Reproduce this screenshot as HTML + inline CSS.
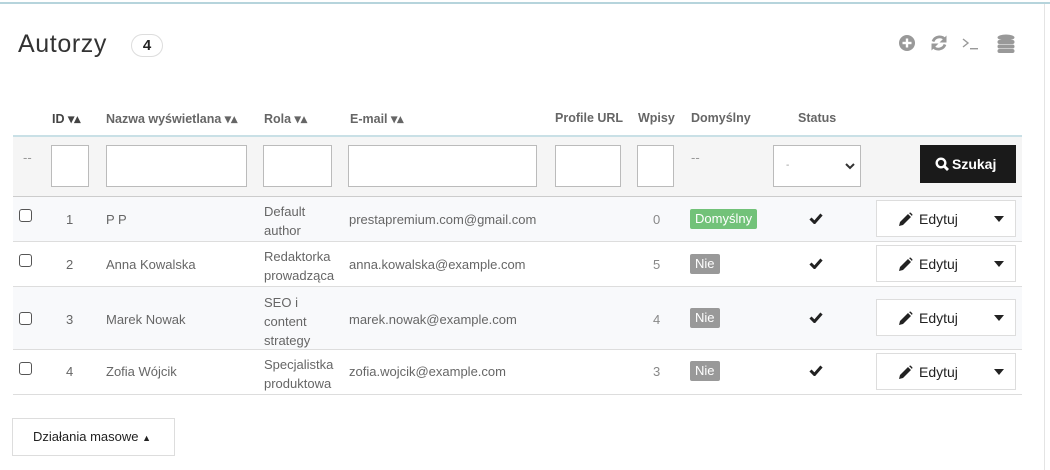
<!DOCTYPE html>
<html><head><meta charset="utf-8"><style>
*{box-sizing:border-box;margin:0;padding:0}
body{width:1050px;height:470px;background:#fff;font-family:"Liberation Sans",sans-serif;position:relative;overflow:hidden;color:#555;font-size:13px}
.a{position:absolute;white-space:nowrap}
.th{font-size:12.5px;color:#666;font-weight:bold;top:111px}
.inp{position:absolute;background:#fff;border:1px solid #bbb;top:145px;height:42px}
.row{position:absolute;left:13px;width:1009px;border-bottom:1px solid #ddd}
.cb{position:absolute;left:19px;width:13px;height:13px;border:1px solid #555;border-radius:3px;background:#fff}
.t{font-size:13px;color:#666}
.btn{position:absolute;left:876px;width:140px;height:37px;border:1px solid #ddd;background:#fff;font-size:14px;color:#222}
.lab{position:absolute;left:690px;height:20px;background:#999;color:#fff;border-radius:2px;font-size:13px;padding:2px 5px;line-height:16px}
</style></head><body>
<div class="a" style="left:0;top:2px;width:1050px;height:2px;background:#b6d4dc"></div>
<div class="a" style="left:1044px;top:4px;width:1px;height:466px;background:#e4e4e4"></div>
<div class="a" style="left:18px;top:30px;font-size:25px;color:#333;letter-spacing:0.6px">Autorzy</div>
<div class="a" style="left:131px;top:34px;width:32px;height:23px;border:1px solid #ddd;border-radius:12px;text-align:center;font-weight:bold;font-size:15px;color:#222;line-height:21px">4</div>
<svg class="a" style="left:898px;top:33px" width="120" height="22" viewBox="0 0 120 22">
<circle cx="9" cy="10" r="8" fill="#999"/><rect x="4.5" y="8.8" width="9" height="2.4" fill="#fff"/><rect x="7.8" y="5.5" width="2.4" height="9" fill="#fff"/>
<path d="M47 6.5a7 7 0 0 0-12 2M35 13.5a7 7 0 0 0 12-2" stroke="#999" stroke-width="2.8" fill="none"/><path d="M48.5 2.5v7h-7zM33.5 17.5v-7h7z" fill="#999"/>
<path d="M65 6l5 4-5 4" stroke="#999" stroke-width="1.4" fill="none"/><rect x="72" y="15" width="8" height="1.4" fill="#999"/>
<ellipse cx="108" cy="4.5" rx="8.5" ry="3" fill="#999"/><rect x="99.5" y="7" width="17" height="4" rx="2" fill="#999"/><rect x="99.5" y="11.5" width="17" height="4" rx="2" fill="#999"/><rect x="99.5" y="16" width="17" height="4" rx="2" fill="#999"/>
</svg>
<div class="a th" style="left:52px;color:#444">ID ▾▴</div>
<div class="a th" style="left:106px">Nazwa wyświetlana ▾▴</div>
<div class="a th" style="left:264px">Rola ▾▴</div>
<div class="a th" style="left:350px">E-mail ▾▴</div>
<div class="a th" style="left:555px">Profile URL</div>
<div class="a th" style="left:638px">Wpisy</div>
<div class="a th" style="left:691px">Domyślny</div>
<div class="a th" style="left:798px">Status</div>
<div class="a" style="left:13px;top:135px;width:1009px;height:62px;background:#f5f5f5;border-top:2px solid #c9e0e6;border-bottom:1px solid #ccc"></div>
<div class="a" style="left:23px;top:150px;color:#999">--</div>
<div class="inp" style="left:51px;width:38px"></div>
<div class="inp" style="left:106px;width:141px"></div>
<div class="inp" style="left:263px;width:69px"></div>
<div class="inp" style="left:348px;width:189px"></div>
<div class="inp" style="left:555px;width:66px"></div>
<div class="inp" style="left:637px;width:37px"></div>
<div class="a" style="left:691px;top:150px;color:#999">--</div>
<div class="inp" style="left:773px;width:88px"><span class="a" style="left:12px;top:14px;color:#999;font-size:10px">-</span><svg class="a" style="left:71px;top:17px" width="10" height="7" viewBox="0 0 10 7"><path d="M1 1l4 4 4-4" stroke="#333" stroke-width="2" fill="none"/></svg></div>
<div class="a" style="left:920px;top:145px;width:96px;height:38px;background:#1a1a1a;color:#fff;font-weight:bold;font-size:14px;line-height:38px"><svg class="a" style="left:15px;top:12px" width="14" height="14" viewBox="0 0 14 14"><circle cx="6" cy="6" r="4.3" stroke="#fff" stroke-width="2.4" fill="none"/><path d="M9 9l4 4" stroke="#fff" stroke-width="2.8"/></svg><span class="a" style="left:32px;top:0">Szukaj</span></div>

<div class="row" style="top:197px;height:45px;background:#f8f9fb"></div>
<div class="row" style="top:242px;height:45px"></div>
<div class="row" style="top:287px;height:63px;background:#f8f9fb"></div>
<div class="row" style="top:350px;height:45px"></div>

<div class="cb" style="top:209px"></div><div class="cb" style="top:254px"></div><div class="cb" style="top:312px"></div><div class="cb" style="top:362px"></div>
<div class="a t" style="left:66px;top:212px">1</div><div class="a t" style="left:66px;top:257px">2</div><div class="a t" style="left:66px;top:312px">3</div><div class="a t" style="left:66px;top:364px">4</div>
<div class="a t" style="left:106px;top:212px">P P</div><div class="a t" style="left:106px;top:257px">Anna Kowalska</div><div class="a t" style="left:106px;top:312px">Marek Nowak</div><div class="a t" style="left:106px;top:364px">Zofia Wójcik</div>
<div class="a t" style="left:264px;top:202px;line-height:19px">Default<br>author</div>
<div class="a t" style="left:264px;top:247px;line-height:19px">Redaktorka<br>prowadząca</div>
<div class="a t" style="left:264px;top:293px;line-height:19px">SEO i<br>content<br>strategy</div>
<div class="a t" style="left:264px;top:355px;line-height:19px">Specjalistka<br>produktowa</div>
<div class="a t" style="left:349px;top:212px">prestapremium.com@gmail.com</div>
<div class="a t" style="left:349px;top:257px">anna.kowalska@example.com</div>
<div class="a t" style="left:349px;top:312px">marek.nowak@example.com</div>
<div class="a t" style="left:349px;top:364px">zofia.wojcik@example.com</div>
<div class="a t" style="left:653px;top:212px;color:#888">0</div><div class="a t" style="left:653px;top:257px;color:#888">5</div><div class="a t" style="left:653px;top:312px;color:#888">4</div><div class="a t" style="left:653px;top:364px;color:#888">3</div>
<div class="lab" style="top:209px;background:#72c279">Domyślny</div>
<div class="lab" style="top:254px">Nie</div><div class="lab" style="top:308px">Nie</div><div class="lab" style="top:361px">Nie</div>
<svg class="a" style="left:809px;top:213px" width="14" height="11" viewBox="0 0 14 11"><path d="M1.5 5.5l4 4 7-8" stroke="#222" stroke-width="3" fill="none"/></svg>
<svg class="a" style="left:809px;top:258px" width="14" height="11" viewBox="0 0 14 11"><path d="M1.5 5.5l4 4 7-8" stroke="#222" stroke-width="3" fill="none"/></svg>
<svg class="a" style="left:809px;top:312px" width="14" height="11" viewBox="0 0 14 11"><path d="M1.5 5.5l4 4 7-8" stroke="#222" stroke-width="3" fill="none"/></svg>
<svg class="a" style="left:809px;top:365px" width="14" height="11" viewBox="0 0 14 11"><path d="M1.5 5.5l4 4 7-8" stroke="#222" stroke-width="3" fill="none"/></svg>

<div class="btn" style="top:200px"><svg class="a" style="left:21px;top:11px" width="15" height="15" viewBox="0 0 15 15"><path d="M1 14l1-4 8-8 3 3-8 8z M11 1l1.5-.5 2 2-.5 1.5z" fill="#222"/></svg><span class="a" style="left:42px;top:10px">Edytuj</span><svg class="a" style="left:117px;top:15px" width="10" height="6"><path d="M0 0h10l-5 6z" fill="#222"/></svg></div>
<div class="btn" style="top:245px"><svg class="a" style="left:21px;top:11px" width="15" height="15" viewBox="0 0 15 15"><path d="M1 14l1-4 8-8 3 3-8 8z M11 1l1.5-.5 2 2-.5 1.5z" fill="#222"/></svg><span class="a" style="left:42px;top:10px">Edytuj</span><svg class="a" style="left:117px;top:15px" width="10" height="6"><path d="M0 0h10l-5 6z" fill="#222"/></svg></div>
<div class="btn" style="top:299px"><svg class="a" style="left:21px;top:11px" width="15" height="15" viewBox="0 0 15 15"><path d="M1 14l1-4 8-8 3 3-8 8z M11 1l1.5-.5 2 2-.5 1.5z" fill="#222"/></svg><span class="a" style="left:42px;top:10px">Edytuj</span><svg class="a" style="left:117px;top:15px" width="10" height="6"><path d="M0 0h10l-5 6z" fill="#222"/></svg></div>
<div class="btn" style="top:353px"><svg class="a" style="left:21px;top:11px" width="15" height="15" viewBox="0 0 15 15"><path d="M1 14l1-4 8-8 3 3-8 8z M11 1l1.5-.5 2 2-.5 1.5z" fill="#222"/></svg><span class="a" style="left:42px;top:10px">Edytuj</span><svg class="a" style="left:117px;top:15px" width="10" height="6"><path d="M0 0h10l-5 6z" fill="#222"/></svg></div>
<div class="a" style="left:12px;top:418px;width:163px;height:38px;border:1px solid #ddd;font-size:13px;color:#222;padding-left:20px;line-height:36px">Działania masowe <span style="font-size:9px">▲</span></div>
</body></html>
